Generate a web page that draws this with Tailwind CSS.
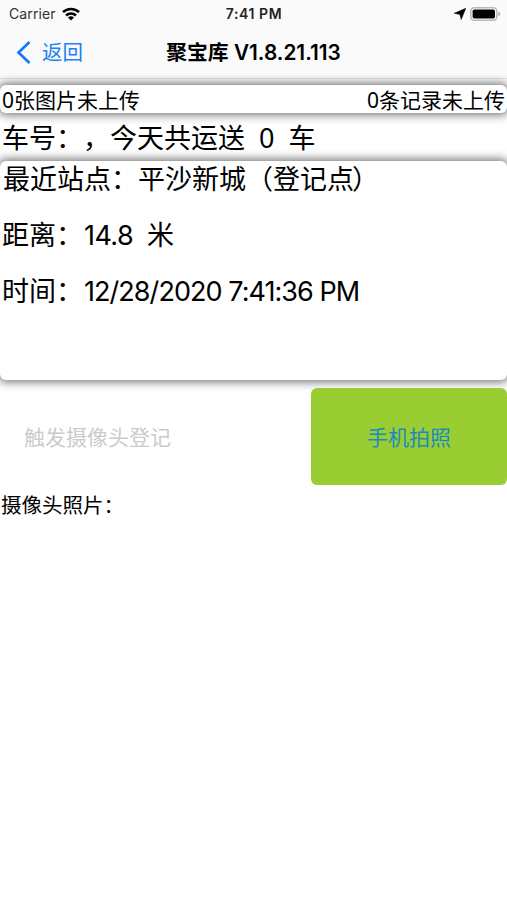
<!DOCTYPE html>
<html lang="zh-CN">
<head>
    <meta charset="UTF-8">
    <meta name="viewport" content="width=device-width, initial-scale=1.0">
    <title>聚宝库</title>
    <script src="https://cdn.jsdelivr.net/npm/@tailwindcss/browser@4"></script>
</head>
<body class="h-screen overflow-hidden bg-white text-black font-['Inter','Noto_Sans_CJK_SC',sans-serif] [text-spacing-trim:space-all]">
    <div class="flex flex-col h-full">
        <!-- Status bar + navigation -->
        <header class="h-[79px] shrink-0 bg-[#fafafa] border-b border-[#e4e4e4]">
            <div class="grid grid-cols-3 items-center h-[27px] pl-[9px] pr-[6px] text-[14px]">
                <div class="flex items-center gap-[6px] text-[#333]">
                    <span class="tracking-[0.1px]">Carrier</span>
                    <svg class="w-[18px] h-[14px]" viewBox="0 0 18 14" fill="none" stroke="#000" stroke-width="2.5">
                        <path d="M1 5.2a11.4 11.4 0 0 1 16 0"/>
                        <path d="M4 8.5a7.2 7.2 0 0 1 10 0"/>
                        <path d="M9 13.5 6 10.6a4.3 4.3 0 0 1 6 0Z" fill="#000" stroke="none"/>
                    </svg>
                </div>
                <div class="pr-[2px] text-center text-[14px] tracking-[0.6px] font-semibold whitespace-nowrap text-[#222]">7:41 PM</div>
                <div class="flex items-center justify-end gap-[4px]">
                    <svg class="w-3 h-3" viewBox="0 0 12 12"><path d="M11.8.3 7.2 11.6 5.9 6.4.2 5.3Z" fill="#000" stroke="#000" stroke-width=".5"/></svg>
                    <svg class="w-[31px] h-[14px]" viewBox="0 0 31 14">
                        <rect x=".8" y=".8" width="26" height="12.4" rx="3.4" fill="#fff" stroke="#b8b8b8" stroke-width="1.5"/>
                        <rect x="2.6" y="2.4" width="22.4" height="9.2" rx="1.8" fill="#000"/>
                        <path d="M28.4 4.6c2.4.9 2.4 3.9 0 4.8Z" fill="#b0b0b0"/>
                    </svg>
                </div>
            </div>
            <div class="grid grid-cols-[120px_1fr_120px] items-center h-[51px]">
                <button class="flex items-center gap-[11px] pl-4 text-[20.5px] text-[#1b82f5]">
                    <svg class="w-[15px] h-6" viewBox="0 0 15 24" fill="none" stroke="#1479f2" stroke-width="2.7"><path d="M13.5 1 2.5 11.5l11 10.5"/></svg>
                    <span class="pt-[2px]">返回</span>
                </button>
                <h1 class="text-center text-[20.8px] font-semibold whitespace-nowrap">聚宝库 V1.8.21.113</h1>
            </div>
        </header>

        <main class="flex flex-col font-['Noto_Sans','Noto_Sans_CJK_SC',sans-serif]">
            <div class="flex items-center justify-between h-7 mt-[6px] pt-[2px] px-[2px] rounded-[6px] bg-white shadow-[0_0_10px_2px_rgba(0,0,0,0.55)] text-[21px] leading-7">
                <span>0张图片未上传</span>
                <span>0条记录未上传</span>
            </div>

            <div class="h-12 pl-[2px] text-[27px] leading-[50px] whitespace-pre">车号：，今天共运送  0  车</div>

            <!-- Nearest station -->
            <section class="h-[219px] px-[2px] rounded-[6px] bg-white shadow-[0_0_10px_2px_rgba(0,0,0,0.55)] text-[27px] leading-[56px]">
                <div class="h-14 -mt-[10px] pl-px">最近站点：平沙新城（登记<span class="tracking-[-2px]">点</span>）</div>
                <div class="h-14 whitespace-pre">距离：<span class="pl-px tracking-[-0.6px] font-['Inter']">14.8</span>  米</div>
                <div class="h-14">时间：<span class="pl-px tracking-[-0.95px] font-['Inter']">12/28/2020 7:41:36 PM</span></div>
            </section>

            <div class="flex h-[97px] mt-2 text-[21px]">
                <button class="w-[195px] pt-[2px] text-[#cbcbcb]" disabled>触发摄像头登记</button>
                <button class="w-[196px] pt-[2px] ml-auto rounded-[6px] bg-[#9acd32] text-[#1a8bbd]">手机拍照</button>
            </div>

            <div class="mt-[5px] pl-px text-[20.5px] leading-[30px]">摄像头照片：</div>
        </main>
    </div>
</body>
</html>
